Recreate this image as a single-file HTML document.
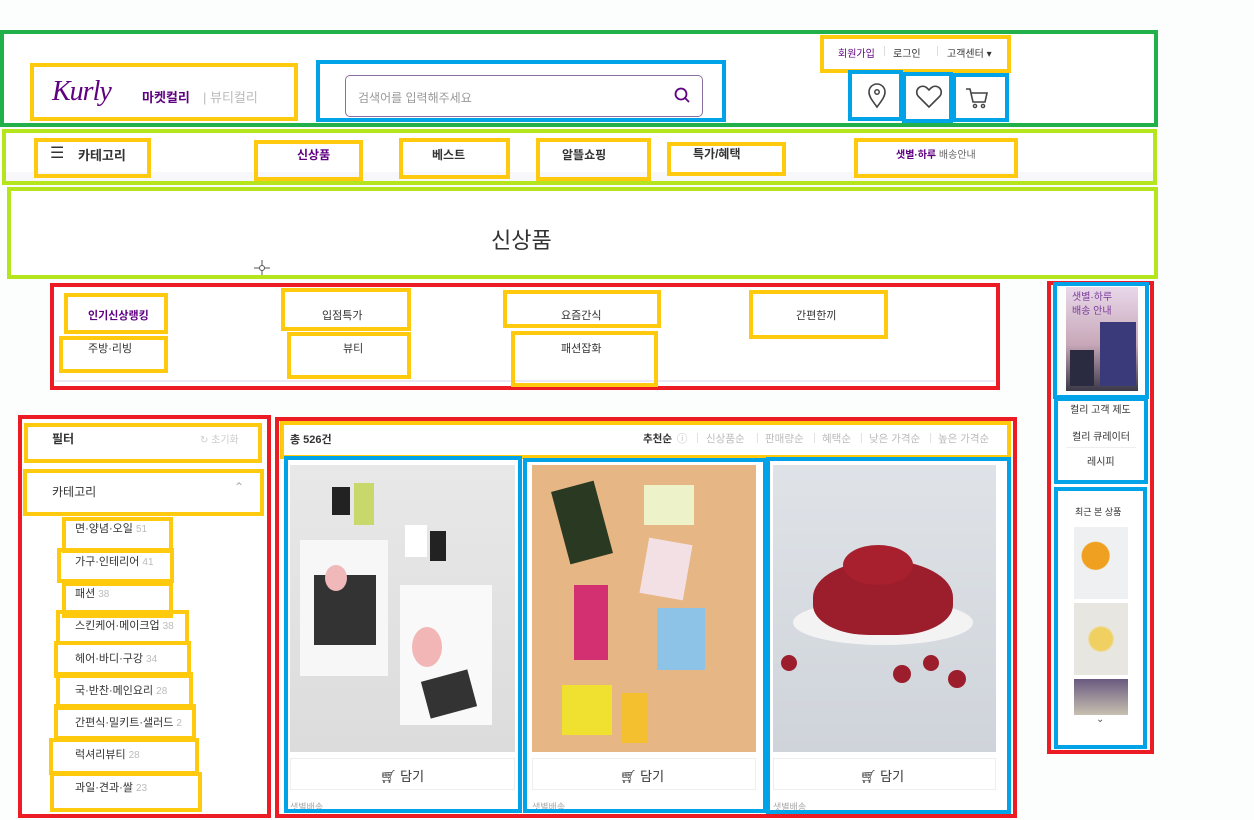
<!DOCTYPE html>
<html><head><meta charset="utf-8">
<style>
*{margin:0;padding:0;box-sizing:border-box}
body{width:1254px;height:820px;overflow:hidden;background:#fcfdfd;font-family:"Liberation Sans","Noto Sans CJK KR",sans-serif;position:relative;color:#333}
.a{position:absolute}
.b{position:absolute;border:4px solid}
.g{border-color:#22b04b}.y{border-color:#ffc90e}.bl{border-color:#00a2e8}.r{border-color:#ed1c24}.l{border-color:#b5e61d}
.t{position:absolute;white-space:nowrap;font-size:11px;color:#333}
.cat{font-size:11px;color:#333}
.cat span{color:#bbb;font-size:10px;margin-left:3px}
.s{position:absolute;white-space:nowrap;font-size:10.5px;color:#bbb;top:431px}
.sep{position:absolute;top:433px;width:1px;height:10px;background:#e2e2e2}
</style></head><body>
<div class="a" style="left:0;top:34px;width:1154px;height:88px;background:#fff"></div>
<div class="a" style="left:4px;top:134px;width:1150px;height:48px;background:#fff"></div>
<div class="a" style="left:12px;top:191px;width:1142px;height:84px;background:#fff"></div>
<div class="a" style="left:55px;top:288px;width:940px;height:98px;background:#fff"></div>
<div class="a" style="left:23px;top:420px;width:243px;height:395px;background:#fff"></div>
<div class="a" style="left:280px;top:422px;width:732px;height:395px;background:#fff"></div>

<div class="t" style="left:52px;top:76px;font-family:'Liberation Serif',serif;font-style:italic;font-size:28px;color:#5f0080;letter-spacing:-1px">Kurly</div>
<div class="t" style="left:142px;top:87px;font-size:13px;font-weight:bold;color:#5f0080">마켓컬리</div>
<div class="t" style="left:203px;top:87px;font-size:13px;color:#bbb">| 뷰티컬리</div>
<div class="a" style="left:345px;top:75px;width:358px;height:42px;border:1px solid #8a6fa0;border-radius:5px;background:#fff"></div>
<div class="t" style="left:358px;top:89px;font-size:12px;color:#999">검색어를 입력해주세요</div>
<svg class="a" style="left:673px;top:86px" width="18" height="18" viewBox="0 0 18 18"><circle cx="8" cy="8" r="5.5" fill="none" stroke="#5f0080" stroke-width="1.8"/><path d="M12 12l4 4" stroke="#5f0080" stroke-width="1.8"/></svg>
<div class="t" style="left:838px;top:45px;font-size:10px;color:#5f0080">회원가입</div>
<div class="t" style="left:893px;top:45px;font-size:10px;color:#333">로그인</div>
<div class="t" style="left:947px;top:45px;font-size:10px;color:#333">고객센터 ▾</div>
<div class="a" style="left:884px;top:46px;width:1px;height:10px;background:#ddd"></div>
<div class="a" style="left:937px;top:46px;width:1px;height:10px;background:#ddd"></div>
<svg class="a" style="left:866px;top:83px" width="22" height="26" viewBox="0 0 22 26"><path d="M11 24C5 16 3 13 3 9a8 8 0 0116 0c0 4-2 7-8 15z" fill="none" stroke="#444" stroke-width="1.6"/><circle cx="11" cy="9" r="2.2" fill="none" stroke="#444" stroke-width="1.5"/></svg>
<svg class="a" style="left:915px;top:85px" width="28" height="24" viewBox="0 0 28 24"><path d="M14 22L3.5 11.5a6 6 0 018.5-8.5l2 2 2-2a6 6 0 018.5 8.5z" fill="none" stroke="#444" stroke-width="1.6"/></svg>
<svg class="a" style="left:964px;top:85px" width="26" height="26" viewBox="0 0 26 26"><path d="M2 4h4l3 13h12l2-9H7" fill="none" stroke="#444" stroke-width="1.6"/><circle cx="11" cy="21" r="1.6" fill="none" stroke="#444" stroke-width="1.4"/><circle cx="19" cy="21" r="1.6" fill="none" stroke="#444" stroke-width="1.4"/></svg>

<div class="t" style="left:50px;top:143px;font-size:16px;color:#333">☰</div>
<div class="t" style="left:78px;top:145px;font-size:13px;font-weight:bold">카테고리</div>
<div class="t" style="left:297px;top:146px;font-size:12px;font-weight:bold;color:#5f0080">신상품</div>
<div class="t" style="left:432px;top:146px;font-size:12px;font-weight:bold">베스트</div>
<div class="t" style="left:562px;top:146px;font-size:12px;font-weight:bold">알뜰쇼핑</div>
<div class="t" style="left:693px;top:145px;font-size:12px;font-weight:bold">특가/혜택</div>
<div class="t" style="left:896px;top:146px;font-size:10px;font-weight:bold;color:#5f0080">샛별·하루 <span style="font-weight:normal;color:#666">배송안내</span></div>
<div class="a" style="left:4px;top:172px;width:1150px;height:10px;background:#f8f8fa"></div>

<div class="t" style="left:491px;top:223px;font-size:22px;color:#333">신상품</div>
<svg class="a" style="left:252px;top:258px" width="20" height="20" viewBox="0 0 20 20"><path d="M10 2v16M2 10h16" stroke="#555" stroke-width="1"/><circle cx="10" cy="10" r="2.5" fill="#fff" stroke="#555"/></svg>

<div class="t" style="left:88px;top:307px;font-weight:bold;color:#5f0080">인기신상랭킹</div>
<div class="t" style="left:322px;top:307px">입점특가</div>
<div class="t" style="left:561px;top:307px">요즘간식</div>
<div class="t" style="left:796px;top:307px">간편한끼</div>
<div class="t" style="left:88px;top:340px">주방·리빙</div>
<div class="t" style="left:343px;top:340px">뷰티</div>
<div class="t" style="left:561px;top:340px">패션잡화</div>
<div class="a" style="left:55px;top:380px;width:940px;height:2px;background:#eee8f2"></div>

<div class="t" style="left:52px;top:430px;font-size:12px;font-weight:bold">필터</div>
<div class="t" style="left:200px;top:431px;font-size:10px;color:#ccc">↻ 초기화</div>
<div class="t" style="left:52px;top:483px;font-size:12px">카테고리</div>
<div class="t" style="left:234px;top:480px;font-size:12px;color:#aaa">⌃</div>
<div class="t cat" style="left:75px;top:520px">면·양념·오일<span>51</span></div>
<div class="t cat" style="left:75px;top:553px">가구·인테리어<span>41</span></div>
<div class="t cat" style="left:75px;top:585px">패션<span>38</span></div>
<div class="t cat" style="left:75px;top:617px">스킨케어·메이크업<span>38</span></div>
<div class="t cat" style="left:75px;top:650px">헤어·바디·구강<span>34</span></div>
<div class="t cat" style="left:75px;top:682px">국·반찬·메인요리<span>28</span></div>
<div class="t cat" style="left:75px;top:714px">간편식·밀키트·샐러드<span>2</span></div>
<div class="t cat" style="left:75px;top:746px">럭셔리뷰티<span>28</span></div>
<div class="t cat" style="left:75px;top:779px">과일·견과·쌀<span>23</span></div>

<div class="t" style="left:290px;top:431px;font-size:11px;font-weight:bold">총 526건</div>
<div class="s" style="left:643px;color:#333;font-weight:bold">추천순</div>
<div class="s" style="left:677px">ⓘ</div>
<div class="sep" style="left:697px"></div>
<div class="s" style="left:706px">신상품순</div>
<div class="sep" style="left:757px"></div>
<div class="s" style="left:765px">판매량순</div>
<div class="sep" style="left:814px"></div>
<div class="s" style="left:822px">혜택순</div>
<div class="sep" style="left:861px"></div>
<div class="s" style="left:869px">낮은 가격순</div>
<div class="sep" style="left:930px"></div>
<div class="s" style="left:938px">높은 가격순</div>

<div class="a" style="left:290px;top:465px;width:225px;height:287px;background:linear-gradient(#e8e8e8,#dcdcdc)">
 <div class="a" style="left:42px;top:22px;width:18px;height:28px;background:#222"></div>
 <div class="a" style="left:64px;top:18px;width:20px;height:42px;background:#c8d86a"></div>
 <div class="a" style="left:115px;top:60px;width:22px;height:32px;background:#fff"></div>
 <div class="a" style="left:140px;top:66px;width:16px;height:30px;background:#222"></div>
 <div class="a" style="left:10px;top:75px;width:88px;height:136px;background:#f7f7f7"></div>
 <div class="a" style="left:24px;top:110px;width:62px;height:70px;background:#333"></div>
 <div class="a" style="left:35px;top:100px;width:22px;height:26px;border-radius:50%;background:#f0b8b8"></div>
 <div class="a" style="left:110px;top:120px;width:92px;height:140px;background:#f9f9f9"></div>
 <div class="a" style="left:135px;top:210px;width:48px;height:38px;background:#333;transform:rotate(-15deg)"></div>
 <div class="a" style="left:122px;top:162px;width:30px;height:40px;border-radius:50%;background:#f2b6b6"></div>
</div>
<div class="a" style="left:532px;top:465px;width:224px;height:287px;background:#e6b684">
 <div class="a" style="left:28px;top:20px;width:44px;height:75px;background:#2a3a22;transform:rotate(-15deg)"></div>
 <div class="a" style="left:112px;top:20px;width:50px;height:40px;background:#eef2c8"></div>
 <div class="a" style="left:112px;top:76px;width:44px;height:56px;background:#f2e0e4;transform:rotate(10deg)"></div>
 <div class="a" style="left:42px;top:120px;width:34px;height:75px;background:#d23070"></div>
 <div class="a" style="left:125px;top:143px;width:48px;height:62px;background:#8ec3e8"></div>
 <div class="a" style="left:30px;top:220px;width:50px;height:50px;background:#f0e030"></div>
 <div class="a" style="left:90px;top:228px;width:26px;height:50px;background:#f4c030"></div>
</div>
<div class="a" style="left:773px;top:465px;width:223px;height:287px;background:linear-gradient(#dfe3e8,#cfd4da)">
 <div class="a" style="left:20px;top:135px;width:180px;height:45px;border-radius:50%;background:#f3f3f3"></div>
 <div class="a" style="left:40px;top:95px;width:140px;height:75px;border-radius:50% 50% 40% 40%;background:#9c1e2c"></div>
 <div class="a" style="left:70px;top:80px;width:70px;height:40px;border-radius:50%;background:#a8202e"></div>
 <div class="a" style="left:8px;top:190px;width:16px;height:16px;border-radius:50%;background:#9c1e2c"></div>
 <div class="a" style="left:120px;top:200px;width:18px;height:18px;border-radius:50%;background:#9c1e2c"></div>
 <div class="a" style="left:175px;top:205px;width:18px;height:18px;border-radius:50%;background:#9c1e2c"></div>
 <div class="a" style="left:150px;top:190px;width:16px;height:16px;border-radius:50%;background:#9c1e2c"></div>
</div>
<div class="a" style="left:290px;top:758px;width:225px;height:32px;border:1px solid #eee;background:#fff"></div>
<div class="a" style="left:532px;top:758px;width:224px;height:32px;border:1px solid #eee;background:#fff"></div>
<div class="a" style="left:773px;top:758px;width:223px;height:32px;border:1px solid #eee;background:#fff"></div>
<div class="t" style="left:380px;top:766px;font-size:13px">🛒︎ 담기</div>
<div class="t" style="left:620px;top:766px;font-size:13px">🛒︎ 담기</div>
<div class="t" style="left:860px;top:766px;font-size:13px">🛒︎ 담기</div>
<div class="t" style="left:290px;top:800px;font-size:9px;color:#aaa">샛별배송</div>
<div class="t" style="left:532px;top:800px;font-size:9px;color:#aaa">샛별배송</div>
<div class="t" style="left:773px;top:800px;font-size:9px;color:#aaa">샛별배송</div>

<div class="a" style="left:1066px;top:287px;width:72px;height:104px;background:linear-gradient(#e8d8ea,#c8a8b8 55%,#3a3848)"></div>
<div class="a" style="left:1100px;top:322px;width:36px;height:64px;background:#3a3a7a"></div>
<div class="a" style="left:1070px;top:350px;width:24px;height:36px;background:#2a2a40"></div>
<div class="t" style="left:1072px;top:291px;font-size:10px;color:#7a3a9a;line-height:14px">샛별·하루<br>배송 안내</div>
<div class="a" style="left:1059px;top:402px;width:84px;height:78px;background:#fff"></div>
<div class="t" style="left:1070px;top:401px;font-size:10px">컬리 고객 제도</div>
<div class="t" style="left:1072px;top:428px;font-size:10px">컬리 큐레이터</div>
<div class="a" style="left:1066px;top:447px;width:70px;height:1px;background:#eee"></div>
<div class="t" style="left:1087px;top:453px;font-size:10px">레시피</div>
<div class="a" style="left:1059px;top:492px;width:83px;height:252px;background:#fff"></div>
<div class="t" style="left:1075px;top:505px;font-size:9px">최근 본 상품</div>
<div class="a" style="left:1074px;top:527px;width:54px;height:72px;background:radial-gradient(circle at 40% 40%,#f0a020 25%,#eef0f2 27%)"></div>
<div class="a" style="left:1074px;top:603px;width:54px;height:72px;background:radial-gradient(circle at 50% 50%,#f0d060 25%,#e8e6e0 30%)"></div>
<div class="a" style="left:1074px;top:679px;width:54px;height:36px;background:linear-gradient(#6a5a80,#c8c0b0)"></div>
<div class="t" style="left:1096px;top:714px;font-size:10px;color:#555">⌄</div>

<div class="b g" style="left:0;top:30px;width:1158px;height:97px"></div>
<div class="b y" style="left:30px;top:63px;width:268px;height:58px"></div>
<div class="b bl" style="left:316px;top:60px;width:410px;height:62px"></div>
<div class="b y" style="left:820px;top:35px;width:191px;height:38px"></div>
<div class="b bl" style="left:848px;top:70px;width:55px;height:51px"></div>
<div class="b bl" style="left:902px;top:72px;width:51px;height:51px"></div>
<div class="b bl" style="left:952px;top:73px;width:57px;height:49px"></div>

<div class="b l" style="left:2px;top:129px;width:1155px;height:56px"></div>
<div class="b y" style="left:34px;top:138px;width:117px;height:40px"></div>
<div class="b y" style="left:254px;top:140px;width:109px;height:41px"></div>
<div class="b y" style="left:399px;top:138px;width:111px;height:41px"></div>
<div class="b y" style="left:536px;top:138px;width:115px;height:43px"></div>
<div class="b y" style="left:667px;top:142px;width:119px;height:34px"></div>
<div class="b y" style="left:854px;top:138px;width:164px;height:40px"></div>

<div class="b l" style="left:7px;top:187px;width:1151px;height:92px"></div>

<div class="b r" style="left:50px;top:283px;width:950px;height:107px"></div>
<div class="b y" style="left:64px;top:293px;width:104px;height:41px"></div>
<div class="b y" style="left:281px;top:288px;width:130px;height:43px"></div>
<div class="b y" style="left:503px;top:290px;width:158px;height:38px"></div>
<div class="b y" style="left:749px;top:290px;width:139px;height:49px"></div>
<div class="b y" style="left:59px;top:336px;width:109px;height:37px"></div>
<div class="b y" style="left:287px;top:332px;width:124px;height:47px"></div>
<div class="b y" style="left:511px;top:331px;width:147px;height:56px"></div>

<div class="b r" style="left:18px;top:415px;width:253px;height:403px"></div>
<div class="b y" style="left:24px;top:423px;width:238px;height:40px"></div>
<div class="b y" style="left:23px;top:469px;width:241px;height:47px"></div>
<div class="b y" style="left:62px;top:517px;width:111px;height:36px"></div>
<div class="b y" style="left:57px;top:548px;width:117px;height:35px"></div>
<div class="b y" style="left:62px;top:582px;width:111px;height:36px"></div>
<div class="b y" style="left:56px;top:610px;width:133px;height:35px"></div>
<div class="b y" style="left:54px;top:641px;width:137px;height:37px"></div>
<div class="b y" style="left:56px;top:672px;width:137px;height:38px"></div>
<div class="b y" style="left:54px;top:704px;width:142px;height:36px"></div>
<div class="b y" style="left:49px;top:738px;width:150px;height:37px"></div>
<div class="b y" style="left:50px;top:772px;width:152px;height:40px"></div>

<div class="b r" style="left:275px;top:417px;width:742px;height:401px"></div>
<div class="b y" style="left:280px;top:421px;width:731px;height:38px"></div>
<div class="b bl" style="left:284px;top:456px;width:238px;height:357px"></div>
<div class="b bl" style="left:523px;top:458px;width:244px;height:355px"></div>
<div class="b bl" style="left:766px;top:457px;width:245px;height:357px"></div>

<div class="b r" style="left:1047px;top:281px;width:107px;height:473px"></div>
<div class="b bl" style="left:1053px;top:282px;width:96px;height:117px"></div>
<div class="b bl" style="left:1054px;top:397px;width:94px;height:87px"></div>
<div class="b bl" style="left:1054px;top:487px;width:93px;height:262px"></div>
</body></html>
